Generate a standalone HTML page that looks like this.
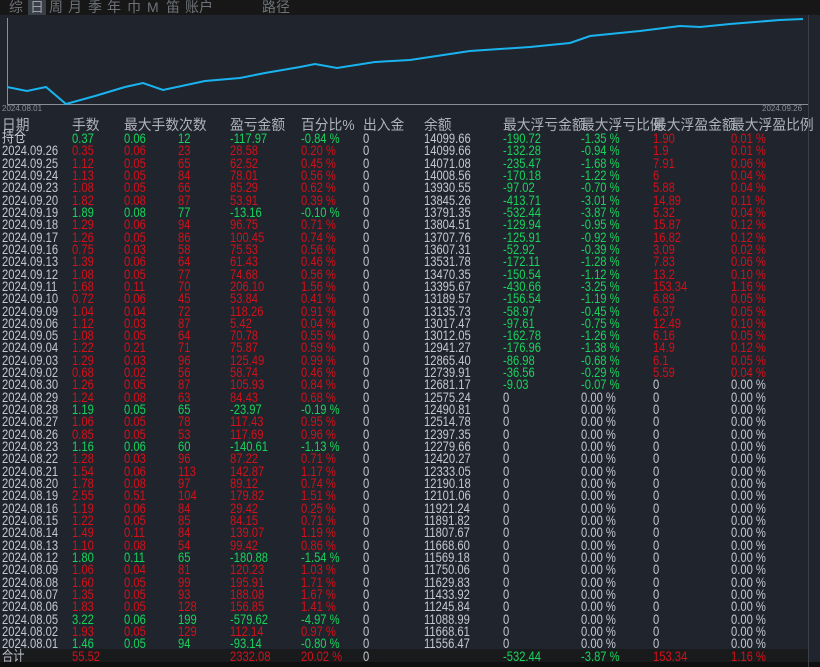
<!DOCTYPE html>
<html><head><meta charset="utf-8"><style>
*{margin:0;padding:0;box-sizing:border-box}
body{width:820px;height:667px;background:#20242c;overflow:hidden;position:relative;font-family:"Liberation Sans","Noto Sans CJK SC",sans-serif;}
.tab{position:absolute;top:0;left:0;width:820px;height:15px;background:#171717;color:#6e7278;font-size:14px;line-height:15px}
.tab span{position:absolute;top:0}
.r{position:absolute;left:0;width:808px;height:12px;font-size:14px;line-height:12px;color:#c3c8d2}
.r span{position:absolute;top:0;transform:scaleX(.8);transform-origin:left;white-space:nowrap}
.r span:nth-child(1){left:2px}.r span:nth-child(2){left:72px}.r span:nth-child(3){left:124px}.r span:nth-child(4){left:178px}.r span:nth-child(5){left:230px}.r span:nth-child(6){left:301px}.r span:nth-child(7){left:363px}.r span:nth-child(8){left:424px}.r span:nth-child(9){left:503px}.r span:nth-child(10){left:581px}.r span:nth-child(11){left:653px}.r span:nth-child(12){left:731px}
.R span:nth-child(n+2):nth-child(-n+6){color:#d4101a}
.G span:nth-child(n+2):nth-child(-n+6){color:#18d35c}
.f span:nth-child(9),.f span:nth-child(10){color:#18d35c}
.f span:nth-child(11),.f span:nth-child(12){color:#d4101a}
.h{font-size:14.5px;color:#aeb2ba}
.h span{transform:scaleX(.95)}
</style></head><body>
<div class="tab"><span style="left:9px">综</span><span style="left:28px;background:#3a3e46;padding:0 2px;color:#9aa0a8">日</span><span style="left:49px">周</span><span style="left:68px">月</span><span style="left:88px">季</span><span style="left:107px">年</span><span style="left:127px">巾</span><span style="left:147px">M</span><span style="left:166px">笛</span><span style="left:185px">账户</span><span style="left:262px">路径</span></div>
<svg style="position:absolute;left:0;top:15px" width="820" height="100">
<line x1="7.5" y1="3" x2="7.5" y2="89" stroke="#8a8e96" stroke-width="1"/>
<line x1="7" y1="89.5" x2="808" y2="89.5" stroke="#8a8e96" stroke-width="1"/>
<line x1="808.5" y1="0" x2="808.5" y2="100" stroke="#3a3e46"/>
<polyline fill="none" stroke="#19b4f0" stroke-width="2" points="7,72 27,76 46,72 66,89 95,81 125,72 143,68 163,75 205,66 240,63 265,58 300,52 315,49 337,53 375,47 410,45 470,36 530,32 570,28 590,21 640,16 680,11 700,12 730,9 780,5 803,4"/>
<text x="2" y="96" font-size="8" fill="#8a8e96" font-family="Liberation Sans">2024.08.01</text>
<text x="762" y="96" font-size="8" fill="#8a8e96" font-family="Liberation Sans">2024.09.26</text>
</svg>
<div class="r h" style="top:119px;height:14px;line-height:14px"><span>日期</span><span>手数</span><span>最大手数次数</span><span></span><span>盈亏金额</span><span>百分比%</span><span>出入金</span><span>余额</span><span>最大浮亏金额</span><span>最大浮亏比例</span><span>最大浮盈金额</span><span>最大浮盈比例</span></div>
<div class="r G f" style="top:132px"><span style="font-size:15px">持仓</span><span>0.37</span><span>0.06</span><span>12</span><span>-117.97</span><span>-0.84 %</span><span>0</span><span>14099.66</span><span>-190.72</span><span>-1.35 %</span><span>1.90</span><span>0.01 %</span></div>
<div class="r R f" style="top:144.3px"><span>2024.09.26</span><span>0.35</span><span>0.06</span><span>23</span><span>28.58</span><span>0.20 %</span><span>0</span><span>14099.66</span><span>-132.28</span><span>-0.94 %</span><span>1.9</span><span>0.01 %</span></div>
<div class="r R f" style="top:156.6px"><span>2024.09.25</span><span>1.12</span><span>0.05</span><span>65</span><span>62.52</span><span>0.45 %</span><span>0</span><span>14071.08</span><span>-235.47</span><span>-1.68 %</span><span>7.91</span><span>0.06 %</span></div>
<div class="r R f" style="top:169px"><span>2024.09.24</span><span>1.13</span><span>0.05</span><span>84</span><span>78.01</span><span>0.56 %</span><span>0</span><span>14008.56</span><span>-170.18</span><span>-1.22 %</span><span>6</span><span>0.04 %</span></div>
<div class="r R f" style="top:181.3px"><span>2024.09.23</span><span>1.08</span><span>0.05</span><span>66</span><span>85.29</span><span>0.62 %</span><span>0</span><span>13930.55</span><span>-97.02</span><span>-0.70 %</span><span>5.88</span><span>0.04 %</span></div>
<div class="r R f" style="top:193.6px"><span>2024.09.20</span><span>1.82</span><span>0.08</span><span>87</span><span>53.91</span><span>0.39 %</span><span>0</span><span>13845.26</span><span>-413.71</span><span>-3.01 %</span><span>14.89</span><span>0.11 %</span></div>
<div class="r G f" style="top:205.9px"><span>2024.09.19</span><span>1.89</span><span>0.08</span><span>77</span><span>-13.16</span><span>-0.10 %</span><span>0</span><span>13791.35</span><span>-532.44</span><span>-3.87 %</span><span>5.32</span><span>0.04 %</span></div>
<div class="r R f" style="top:218.2px"><span>2024.09.18</span><span>1.29</span><span>0.06</span><span>94</span><span>96.75</span><span>0.71 %</span><span>0</span><span>13804.51</span><span>-129.94</span><span>-0.95 %</span><span>15.87</span><span>0.12 %</span></div>
<div class="r R f" style="top:230.6px"><span>2024.09.17</span><span>1.26</span><span>0.05</span><span>86</span><span>100.45</span><span>0.74 %</span><span>0</span><span>13707.76</span><span>-125.91</span><span>-0.92 %</span><span>16.82</span><span>0.12 %</span></div>
<div class="r R f" style="top:242.9px"><span>2024.09.16</span><span>0.75</span><span>0.03</span><span>58</span><span>75.53</span><span>0.56 %</span><span>0</span><span>13607.31</span><span>-52.92</span><span>-0.39 %</span><span>3.09</span><span>0.02 %</span></div>
<div class="r R f" style="top:255.2px"><span>2024.09.13</span><span>1.39</span><span>0.06</span><span>64</span><span>61.43</span><span>0.46 %</span><span>0</span><span>13531.78</span><span>-172.11</span><span>-1.28 %</span><span>7.83</span><span>0.06 %</span></div>
<div class="r R f" style="top:267.5px"><span>2024.09.12</span><span>1.08</span><span>0.05</span><span>77</span><span>74.68</span><span>0.56 %</span><span>0</span><span>13470.35</span><span>-150.54</span><span>-1.12 %</span><span>13.2</span><span>0.10 %</span></div>
<div class="r R f" style="top:279.8px"><span>2024.09.11</span><span>1.68</span><span>0.11</span><span>70</span><span>206.10</span><span>1.56 %</span><span>0</span><span>13395.67</span><span>-430.66</span><span>-3.25 %</span><span>153.34</span><span>1.16 %</span></div>
<div class="r R f" style="top:292.2px"><span>2024.09.10</span><span>0.72</span><span>0.06</span><span>45</span><span>53.84</span><span>0.41 %</span><span>0</span><span>13189.57</span><span>-156.54</span><span>-1.19 %</span><span>6.89</span><span>0.05 %</span></div>
<div class="r R f" style="top:304.5px"><span>2024.09.09</span><span>1.04</span><span>0.04</span><span>72</span><span>118.26</span><span>0.91 %</span><span>0</span><span>13135.73</span><span>-58.97</span><span>-0.45 %</span><span>6.37</span><span>0.05 %</span></div>
<div class="r R f" style="top:316.8px"><span>2024.09.06</span><span>1.12</span><span>0.03</span><span>87</span><span>5.42</span><span>0.04 %</span><span>0</span><span>13017.47</span><span>-97.61</span><span>-0.75 %</span><span>12.49</span><span>0.10 %</span></div>
<div class="r R f" style="top:329.1px"><span>2024.09.05</span><span>1.08</span><span>0.05</span><span>64</span><span>70.78</span><span>0.55 %</span><span>0</span><span>13012.05</span><span>-162.78</span><span>-1.26 %</span><span>6.16</span><span>0.05 %</span></div>
<div class="r R f" style="top:341.4px"><span>2024.09.04</span><span>1.22</span><span>0.21</span><span>71</span><span>75.87</span><span>0.59 %</span><span>0</span><span>12941.27</span><span>-176.96</span><span>-1.38 %</span><span>14.9</span><span>0.12 %</span></div>
<div class="r R f" style="top:353.8px"><span>2024.09.03</span><span>1.29</span><span>0.03</span><span>96</span><span>125.49</span><span>0.99 %</span><span>0</span><span>12865.40</span><span>-86.98</span><span>-0.68 %</span><span>6.1</span><span>0.05 %</span></div>
<div class="r R f" style="top:366.1px"><span>2024.09.02</span><span>0.68</span><span>0.02</span><span>56</span><span>58.74</span><span>0.46 %</span><span>0</span><span>12739.91</span><span>-36.56</span><span>-0.29 %</span><span>5.59</span><span>0.04 %</span></div>
<div class="r R" style="top:378.4px"><span>2024.08.30</span><span>1.26</span><span>0.05</span><span>87</span><span>105.93</span><span>0.84 %</span><span>0</span><span>12681.17</span><span style="color:#18d35c">-9.03</span><span style="color:#18d35c">-0.07 %</span><span>0</span><span>0.00 %</span></div>
<div class="r R" style="top:390.7px"><span>2024.08.29</span><span>1.24</span><span>0.08</span><span>63</span><span>84.43</span><span>0.68 %</span><span>0</span><span>12575.24</span><span>0</span><span>0.00 %</span><span>0</span><span>0.00 %</span></div>
<div class="r G" style="top:403px"><span>2024.08.28</span><span>1.19</span><span>0.05</span><span>65</span><span>-23.97</span><span>-0.19 %</span><span>0</span><span>12490.81</span><span>0</span><span>0.00 %</span><span>0</span><span>0.00 %</span></div>
<div class="r R" style="top:415.4px"><span>2024.08.27</span><span>1.06</span><span>0.05</span><span>78</span><span>117.43</span><span>0.95 %</span><span>0</span><span>12514.78</span><span>0</span><span>0.00 %</span><span>0</span><span>0.00 %</span></div>
<div class="r R" style="top:427.7px"><span>2024.08.26</span><span>0.85</span><span>0.05</span><span>53</span><span>117.69</span><span>0.96 %</span><span>0</span><span>12397.35</span><span>0</span><span>0.00 %</span><span>0</span><span>0.00 %</span></div>
<div class="r G" style="top:440px"><span>2024.08.23</span><span>1.16</span><span>0.06</span><span>60</span><span>-140.61</span><span>-1.13 %</span><span>0</span><span>12279.66</span><span>0</span><span>0.00 %</span><span>0</span><span>0.00 %</span></div>
<div class="r R" style="top:452.3px"><span>2024.08.22</span><span>1.28</span><span>0.03</span><span>96</span><span>87.22</span><span>0.71 %</span><span>0</span><span>12420.27</span><span>0</span><span>0.00 %</span><span>0</span><span>0.00 %</span></div>
<div class="r R" style="top:464.6px"><span>2024.08.21</span><span>1.54</span><span>0.06</span><span>113</span><span>142.87</span><span>1.17 %</span><span>0</span><span>12333.05</span><span>0</span><span>0.00 %</span><span>0</span><span>0.00 %</span></div>
<div class="r R" style="top:477px"><span>2024.08.20</span><span>1.78</span><span>0.08</span><span>97</span><span>89.12</span><span>0.74 %</span><span>0</span><span>12190.18</span><span>0</span><span>0.00 %</span><span>0</span><span>0.00 %</span></div>
<div class="r R" style="top:489.3px"><span>2024.08.19</span><span>2.55</span><span>0.51</span><span>104</span><span>179.82</span><span>1.51 %</span><span>0</span><span>12101.06</span><span>0</span><span>0.00 %</span><span>0</span><span>0.00 %</span></div>
<div class="r R" style="top:501.6px"><span>2024.08.16</span><span>1.19</span><span>0.06</span><span>84</span><span>29.42</span><span>0.25 %</span><span>0</span><span>11921.24</span><span>0</span><span>0.00 %</span><span>0</span><span>0.00 %</span></div>
<div class="r R" style="top:513.9px"><span>2024.08.15</span><span>1.22</span><span>0.05</span><span>85</span><span>84.15</span><span>0.71 %</span><span>0</span><span>11891.82</span><span>0</span><span>0.00 %</span><span>0</span><span>0.00 %</span></div>
<div class="r R" style="top:526.2px"><span>2024.08.14</span><span>1.49</span><span>0.11</span><span>84</span><span>139.07</span><span>1.19 %</span><span>0</span><span>11807.67</span><span>0</span><span>0.00 %</span><span>0</span><span>0.00 %</span></div>
<div class="r R" style="top:538.6px"><span>2024.08.13</span><span>1.10</span><span>0.08</span><span>54</span><span>99.42</span><span>0.86 %</span><span>0</span><span>11668.60</span><span>0</span><span>0.00 %</span><span>0</span><span>0.00 %</span></div>
<div class="r G" style="top:550.9px"><span>2024.08.12</span><span>1.80</span><span>0.11</span><span>65</span><span>-180.88</span><span>-1.54 %</span><span>0</span><span>11569.18</span><span>0</span><span>0.00 %</span><span>0</span><span>0.00 %</span></div>
<div class="r R" style="top:563.2px"><span>2024.08.09</span><span>1.06</span><span>0.04</span><span>81</span><span>120.23</span><span>1.03 %</span><span>0</span><span>11750.06</span><span>0</span><span>0.00 %</span><span>0</span><span>0.00 %</span></div>
<div class="r R" style="top:575.5px"><span>2024.08.08</span><span>1.60</span><span>0.05</span><span>99</span><span>195.91</span><span>1.71 %</span><span>0</span><span>11629.83</span><span>0</span><span>0.00 %</span><span>0</span><span>0.00 %</span></div>
<div class="r R" style="top:587.8px"><span>2024.08.07</span><span>1.35</span><span>0.05</span><span>93</span><span>188.08</span><span>1.67 %</span><span>0</span><span>11433.92</span><span>0</span><span>0.00 %</span><span>0</span><span>0.00 %</span></div>
<div class="r R" style="top:600.2px"><span>2024.08.06</span><span>1.83</span><span>0.05</span><span>128</span><span>156.85</span><span>1.41 %</span><span>0</span><span>11245.84</span><span>0</span><span>0.00 %</span><span>0</span><span>0.00 %</span></div>
<div class="r G" style="top:612.5px"><span>2024.08.05</span><span>3.22</span><span>0.06</span><span>199</span><span>-579.62</span><span>-4.97 %</span><span>0</span><span>11088.99</span><span>0</span><span>0.00 %</span><span>0</span><span>0.00 %</span></div>
<div class="r R" style="top:624.8px"><span>2024.08.02</span><span>1.93</span><span>0.05</span><span>129</span><span>112.14</span><span>0.97 %</span><span>0</span><span>11668.61</span><span>0</span><span>0.00 %</span><span>0</span><span>0.00 %</span></div>
<div class="r G" style="top:637.1px"><span>2024.08.01</span><span>1.46</span><span>0.05</span><span>94</span><span>-93.14</span><span>-0.80 %</span><span>0</span><span>11556.47</span><span>0</span><span>0.00 %</span><span>0</span><span>0.00 %</span></div>
<div style="position:absolute;left:0;top:649px;width:808px;height:13px;background:#191a1c"></div>
<div class="r R f" style="top:650px"><span style="color:#b8bcc4">合计</span><span>55.52</span><span></span><span></span><span>2332.08</span><span>20.02 %</span><span>0</span><span></span><span>-532.44</span><span>-3.87 %</span><span>153.34</span><span>1.16 %</span></div>
<div style="position:absolute;left:0;top:662px;width:820px;height:5px;background:#101010"></div>
<div style="position:absolute;left:808px;top:15px;width:1px;height:652px;background:#3a3e46"></div>
</body></html>
